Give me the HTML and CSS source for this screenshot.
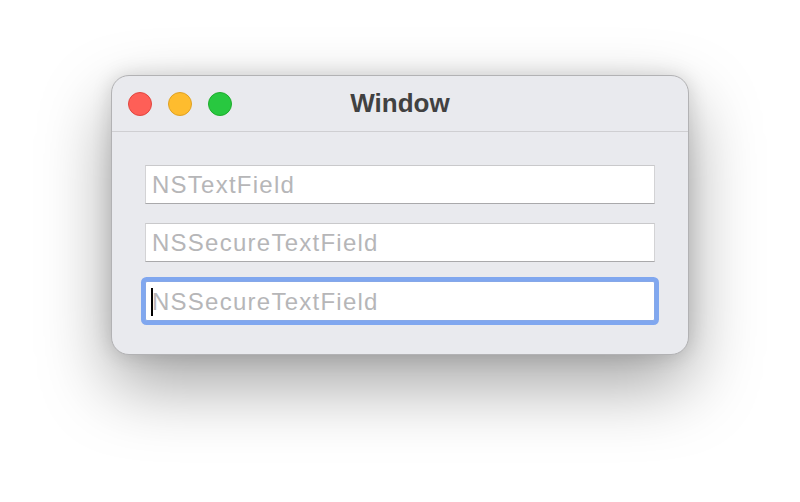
FILE: index.html
```html
<!DOCTYPE html>
<html>
<head>
<meta charset="utf-8">
<link rel="stylesheet" href="styles.css">
</head>
<body>
<div class="stage">
  <div class="window">
    <div class="titlebar">
      <div class="lights">
        <span class="light red"></span>
        <span class="light yellow"></span>
        <span class="light green"></span>
      </div>
      <div class="title">Window</div>
    </div>
    <div class="content">
      <div class="field"><span class="ph">NSTextField</span></div>
      <div class="field"><span class="ph">NSSecureTextField</span></div>
      <div class="field focused"><span class="caret"></span><span class="ph">NSSecureTextField</span></div>
    </div>
  </div>
</div>
</body>
</html>
```
FILE: styles.css
```css
html, body {
  margin: 0;
  padding: 0;
  background: #ffffff;
  width: 800px;
  height: 502px;
  overflow: hidden;
}
.stage {
  padding-top: 75px;
  padding-left: 111px;
}
.window {
  width: 578px;
  height: 280px;
  box-sizing: border-box;
  background: #e9eaee;
  border: 1px solid #b2b2b4;
  border-radius: 18px;
  box-shadow: 0 30px 70px rgba(0,0,0,0.36), 0 0 20px rgba(0,0,0,0.14);
  font-family: "Liberation Sans", Arial, sans-serif;
  overflow: hidden;
}
.titlebar {
  position: relative;
  height: 55px;
  border-bottom: 1px solid #cfcfd2;
  display: flex;
  align-items: center;
}
.lights {
  display: flex;
  gap: 16px;
  padding-left: 16px;
  padding-top: 1px;
}
.light {
  width: 24px;
  height: 24px;
  box-sizing: border-box;
  border-radius: 50%;
}
.red { background: #fe5f57; border: 1px solid #e1463f; }
.yellow { background: #febc2e; border: 1px solid #dfa123; }
.green { background: #28c840; border: 1px solid #1eac2c; }
.title {
  position: absolute;
  left: 0;
  right: 0;
  top: 0;
  bottom: 0;
  display: flex;
  align-items: center;
  justify-content: center;
  font-weight: bold;
  font-size: 26px;
  color: #414141;
  pointer-events: none;
}
.content {
  padding: 33px 33px 0 33px;
  display: flex;
  flex-direction: column;
  gap: 19px;
}
.field {
  height: 39px;
  box-sizing: border-box;
  background: #ffffff;
  border: 1px solid #d3d3d5;
  border-top-color: #c9c9cb;
  border-bottom-color: #a9a9ab;
  display: flex;
  align-items: center;
  padding-left: 6px;
  position: relative;
}
.field.focused {
  height: 40px;
  border: 1px solid #86a8e8;
  border-radius: 2px;
  box-shadow: 0 0 0 4px #80a7ef;
}
.ph {
  font-size: 24px;
  letter-spacing: 1.25px;
  color: #b6b6b8;
  line-height: 1;
  padding-top: 1px;
}
.caret {
  position: absolute;
  left: 5px;
  top: 6px;
  width: 2px;
  height: 28px;
  background: #000;
}
```
